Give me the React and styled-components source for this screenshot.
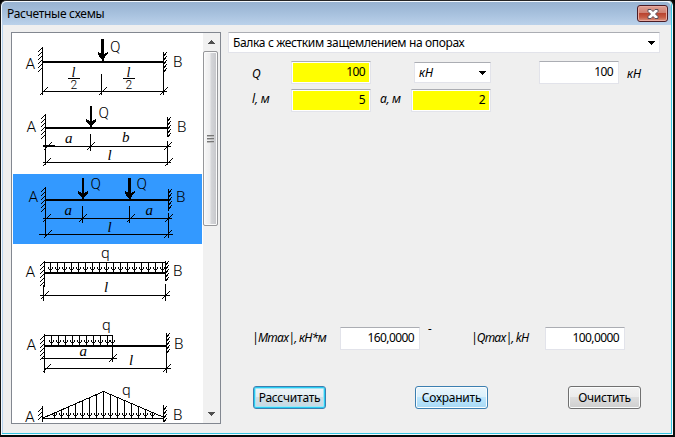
import React from 'react';
import styled, { createGlobalStyle, css } from 'styled-components';

const Global = createGlobalStyle`
  *{box-sizing:border-box}
  body{margin:0;background:#000;overflow:hidden;font:12px "Noto Sans","Open Sans",sans-serif;color:#000}
`;

const Window = styled.div`
  width:675px;height:437px;background:#efefef;overflow:hidden;
  border:solid;border-width:1px 2px 2px 1px;border-color:#252525 #101010 #050505 #151515;
  border-radius:6px 6px 0 0;
  box-shadow:inset 0 0 0 1px #f4f9fd,inset -1px -1px 0 1px #36c5e2,inset 1px 0 0 1px #b8d4ef;
`;
const TitleBar = styled.header`
  height:23px;margin:1px 2px 0 1px;padding:0 3px 0 5px;display:flex;justify-content:space-between;
  background:linear-gradient(#98b3d1,#a5bfdc 45%,#bad1ea);border-radius:5px 5px 0 0;
`;
const Title = styled.span`line-height:23px;font-size:12px;letter-spacing:-.28px;white-space:nowrap;`;
const Close = styled.button`
  width:31px;height:17px;margin-top:3px;padding:0;display:grid;place-items:center;
  border:1px solid #4a1c25;border-radius:3px;box-shadow:inset 0 0 0 1px #e9aaa0;
  background:linear-gradient(#dda094,#cf8071 45%,#b94430 50%,#c65c45 75%,#d99480);
`;
const Main = styled.main`display:flex;padding:7px 0 0 10px;gap:7px;`;
const ListBox = styled.aside`
  width:210px;height:392px;border:1px solid #828790;background:#fff;display:flex;overflow:hidden;
`;
const Schemes = styled.div`width:191px;padding:1px 1px 0;flex:none;overflow:hidden;`;
const Scheme = styled.div`
  height:70px;background:${p => p.$selected ? '#3399ff' : '#fff'};
  svg{display:block}
`;
const ScrollBar = styled.div`
  width:17px;display:flex;flex-direction:column;background:#f1f1f1;
`;
const ScrollButton = styled.div`height:18px;flex:none;display:grid;place-items:center;`;
const Thumb = styled.div`
  height:175px;width:15px;border:1px solid #96979a;border-radius:2px;
  background:linear-gradient(90deg,#f7f7f7,#ededee 45%,#d5d6d9 55%,#c5c6ca);
  box-shadow:inset 0 0 0 1px #fafafa;display:grid;place-items:center;
`;
const Space = styled.div`flex:1;`;
const Form = styled.section`width:432px;height:400px;display:flex;flex-direction:column;`;
const Row = styled.div`
  display:flex;height:${p => p.$h || 22}px;margin-top:${p => p.$top || 0}px;flex:none;
`;
const edge = css`border:1px solid #e2e3ea;border-top-color:#abadb3;background:#fff;`;
const Combo = styled.div`
  ${edge} width:${p => p.$w}px;height:21px;margin-left:${p => p.$left || 0}px;margin-top:${p => p.$top || 0}px;flex:none;
  padding:0 4px 0 4px;display:flex;align-items:center;justify-content:space-between;
  line-height:19px;font-size:12px;letter-spacing:${p => p.$spacing || 0}px;
  font-style:${p => p.$italic ? 'italic' : 'normal'};white-space:nowrap;
`;
const Field = styled.div`
  ${edge} width:80px;height:23px;margin-left:${p => p.$left || 0}px;flex:none;
  padding:0 5px 0 0;line-height:19px;text-align:right;font-size:12px;letter-spacing:-.6px;
  ${p => p.$yellow && css`background:#ff0;box-shadow:inset 0 0 0 1px #fff;`}
`;
const Label = styled.span`
  width:${p => p.$w}px;margin-left:${p => p.$left || 0}px;flex:none;white-space:nowrap;
  padding-top:${p => p.$drop || 0}px;line-height:${p => p.$line || 20}px;font-size:12px;font-style:italic;letter-spacing:${p => p.$spacing || 0}px;
`;
const Button = styled.button`
  width:73px;height:23px;margin-left:${p => p.$left || 0}px;padding:0;flex:none;
  font:12px/20px "Noto Sans","Open Sans",sans-serif;letter-spacing:-.25px;color:#000;white-space:nowrap;
  border:1px solid ${p => p.$kind === 'plain' ? '#707070' : '#3c7fb1'};border-radius:3px;
  background:${p => p.$kind === 'hot' ? 'linear-gradient(#eaf6fd,#d9f0fc 48%,#bee6fd 50%,#a7d9f5)'
    : p.$kind === 'focus' ? 'linear-gradient(#eef5f9,#e3edf2 48%,#cfdee6 50%,#c7d8e2)'
    : 'linear-gradient(#f2f2f2,#ebebeb 48%,#dddddd 50%,#cfcfcf)'};
  box-shadow:${p => p.$kind === 'focus' ? 'inset 0 0 0 1px #28cdf2, inset 0 0 0 2px #a1e5f6' : 'inset 0 0 0 1px #fafcfc'};
`;

const Triangle = ({ w = 7, h = 4, up, fill = '#000' }) => (
  <svg width={w} height={h} viewBox="0 0 7 4" preserveAspectRatio="none" shapeRendering="crispEdges">
    <path fill={fill} d={up ? 'M0 4L3.5 0L7 4z' : 'M0 0H7L3.5 4z'} />
  </svg>
);

const Line = ({ x1, y1, x2, y2, w = 1 }) => (
  <path d={`M${x1} ${y1}L${x2} ${y2}`} stroke="#000" strokeWidth={w} shapeRendering="crispEdges" />
);
const Force = ({ x, y, w = 3 }) => (
  <g shapeRendering="crispEdges">
    <path d={`M${x} ${y}v20`} stroke="#000" strokeWidth={w} />
    <path d={`M${x - 5} ${y + 13}l4 2h2l4 -2v2l-4 5v2h-2v-2l-4 -5z`} />
  </g>
);
const Wall = ({ x, y, h = 23, right }) => {
  const marks = [];
  for (let n = 0; n < h; n += 4) marks.push(`M${right ? x + 1 : x - 4} ${y + n + 4}l${right ? 3 : 4} -4`);
  return <path d={marks.join('')} fill="none" stroke="#000" strokeWidth="1" shapeRendering="crispEdges" />;
};
const Tick = ({ x, y }) => <Line x1={x - 3.5} y1={y + 4} x2={x + 4.5} y2={y - 4} />;
const Dimension = ({ from, to, y, points }) => (
  <g>
    <Line x1={from} y1={y} x2={to} y2={y} />
    {points.map(x => <Tick key={x} x={x} y={y} />)}
  </g>
);
const Letter = ({ x, y, children }) => (
  <text x={x} y={y} fontFamily="Roboto, Liberation Sans, sans-serif" fontWeight="300" fontSize="15.5">{children}</text>
);
const Symbol = ({ x, y, size = 15, children }) => (
  <text x={x} y={y} fontFamily="Liberation Serif, serif" fontStyle="italic" fontSize={size}>{children}</text>
);
const Loads = ({ xs, top, bottom }) => (
  <path
    d={xs.map(x => `M${x} ${top(x)}V${bottom}M${x - 2.5} ${bottom - 4.5}L${x} ${bottom - 1}L${x + 2.5} ${bottom - 4.5}`).join('')}
    fill="none" stroke="#000" shapeRendering="crispEdges"
  />
);
const Drawing = ({ top, children }) => (
  <svg width="189" height="70" viewBox={`13 ${top} 189 70`}>{children}</svg>
);
const series = (start, count) => Array.from({ length: count }, (_, i) => start + 7 * i);

const CentralForce = () => (
  <Drawing top={34}>
    <Line x1={42.5} y1={47} x2={42.5} y2={95} /><Line x1={163.5} y1={52} x2={163.5} y2={95} />
    <Wall x={42} y={48} h={23} /><Wall x={163} y={52} h={18} right />
    <Line x1={42} y1={62} x2={164} y2={62} w={2} /><Force x={102.5} y={39} />
    <Letter x={25.5} y={69}>A</Letter><Letter x={110} y={52}>Q</Letter><Letter x={173} y={67}>B</Letter>
    <Line x1={101.5} y1={74} x2={101.5} y2={95} />
    <Dimension from={42} to={167} y={91.5} points={[43, 102, 163]} />
    {[68, 123].map(x => (
      <g key={x}>
        <Symbol x={x + 3.5} y={76.5} size={14}>l</Symbol><Line x1={x} y1={78.5} x2={x + 12} y2={78.5} />
        <text x={x + 2.5} y={88.5} fontFamily="Roboto, sans-serif" fontWeight="300" fontSize="12">2</text>
      </g>
    ))}
  </Drawing>
);
const OffsetForce = () => (
  <Drawing top={104}>
    <Line x1={45.5} y1={114} x2={45.5} y2={165} /><Line x1={167.5} y1={117} x2={167.5} y2={137} />
    <Line x1={167.5} y1={141} x2={167.5} y2={165} />
    <Wall x={45} y={115} h={22} /><Wall x={167} y={117} h={18} right />
    <Line x1={45} y1={128} x2={168} y2={128} w={2} /><Force x={91} y={106} w={2} />
    <Letter x={26.5} y={131.5}>A</Letter><Letter x={98.5} y={118}>Q</Letter><Letter x={177} y={132}>B</Letter>
    <Line x1={90.5} y1={134} x2={90.5} y2={151} />
    <Dimension from={43} to={171} y={146.5} points={[47, 90, 167]} />
    <Line x1={43} y1={145.5} x2={55} y2={145.5} />
    <Symbol x={65} y={143}>a</Symbol><Symbol x={122} y={142}>b</Symbol>
    <Dimension from={43} to={171} y={162.5} points={[46, 168]} /><Symbol x={107.5} y={160}>l</Symbol>
  </Drawing>
);
const TwoForces = () => (
  <Drawing top={174}>
    <Line x1={45.5} y1={187} x2={45.5} y2={237} /><Line x1={168.5} y1={189} x2={168.5} y2={211} />
    <Line x1={168.5} y1={213} x2={168.5} y2={238} />
    <Wall x={45} y={188} h={22} /><Wall x={168} y={189} h={18} right />
    <Line x1={45} y1={200} x2={169} y2={200} w={2} /><Force x={83} y={178} w={2} /><Force x={129.5} y={178} />
    <Letter x={28.5} y={201.5}>A</Letter><Letter x={90.5} y={189}>Q</Letter><Letter x={136.5} y={189}>Q</Letter><Letter x={176} y={202}>B</Letter>
    <Line x1={82.5} y1={206} x2={82.5} y2={223} /><Line x1={129.5} y1={206} x2={129.5} y2={223} />
    <Dimension from={43} to={172} y={218.5} points={[46, 82, 130, 168]} />
    <Symbol x={64.5} y={215}>a</Symbol><Symbol x={145.5} y={215}>a</Symbol>
    <Dimension from={39} to={173} y={234.5} points={[47, 167]} /><Symbol x={107.5} y={232}>l</Symbol>
  </Drawing>
);
const UniformLoad = () => (
  <Drawing top={244}>
    <Line x1={44.5} y1={261} x2={44.5} y2={287} /><Line x1={43.5} y1={285} x2={43.5} y2={301} />
    <Line x1={165.5} y1={261} x2={165.5} y2={281} /><Line x1={165.5} y1={284} x2={165.5} y2={301} />
    <Wall x={44} y={262} h={23} /><Wall x={165} y={261} h={18} right />
    <Line x1={44} y1={262.5} x2={166} y2={262.5} /><Line x1={44} y1={273} x2={166} y2={273} w={2} />
    <Loads xs={series(50.5, 17)} top={() => 262} bottom={272} />
    <Letter x={25.5} y={276.5}>A</Letter><Letter x={101} y={257.5}>q</Letter><Letter x={173} y={276}>B</Letter>
    <Dimension from={40} to={170} y={295.5} points={[44, 165]} /><Symbol x={104} y={292}>l</Symbol>
  </Drawing>
);
const PartialLoad = () => (
  <Drawing top={314}>
    <Line x1={44.5} y1={334} x2={44.5} y2={373} /><Line x1={166.5} y1={333} x2={166.5} y2={373} />
    <Wall x={44} y={336} h={22} /><Wall x={166} y={333} h={18} right />
    <Line x1={44} y1={335.5} x2={113} y2={335.5} /><Line x1={44} y1={346} x2={167} y2={346} w={2} />
    <Loads xs={[...series(51.5, 9), 112.5]} top={() => 335} bottom={345} />
    <Letter x={26.5} y={349.5}>A</Letter><Letter x={102} y={329.5}>q</Letter><Letter x={174} y={349}>B</Letter>
    <Line x1={112.5} y1={345} x2={112.5} y2={362} />
    <Dimension from={42} to={117} y={358.5} points={[112]} /><Symbol x={79.5} y={356}>a</Symbol>
    <Dimension from={44} to={171} y={368.5} points={[46, 166]} /><Symbol x={129} y={365}>l</Symbol>
  </Drawing>
);
const TriangularLoad = () => (
  <Drawing top={384}>
    <Line x1={42.5} y1={406} x2={42.5} y2={422} /><Line x1={163.5} y1={405} x2={163.5} y2={422} />
    <Wall x={42} y={408} h={12} /><Wall x={163} y={406} h={15} right />
    <path d="M43 418L103.5 391.5L163 417" fill="none" stroke="#000" shapeRendering="crispEdges" />
    <Line x1={43} y1={418.5} x2={163} y2={418.5} />
    <Loads xs={series(54.5, 15)} top={x => x < 103 ? 418 - (x - 43) * .44 : 391.5 + (x - 103) * .43} bottom={418} />
    <Letter x={25} y={421.5}>A</Letter><Letter x={122} y={394.5}>q</Letter><Letter x={173} y={420}>B</Letter>
  </Drawing>
);
const schemes = [CentralForce, OffsetForce, TwoForces, UniformLoad, PartialLoad, TriangularLoad];

export default function App() {
  return (
    <>
      <Global />
      <Window>
        <TitleBar>
          <Title>Расчетные схемы</Title>
          <Close aria-label="Закрыть">
            <svg width="12" height="10" viewBox="0 0 12 10">
              <path d="M1 .5h3l2 2l2-2h3v2l-2.5 2.5L11 7.5v2H8l-2-2l-2 2H1v-2L3.5 5L1 2.5z" fill="#fff" stroke="#57505d" />
            </svg>
          </Close>
        </TitleBar>
        <Main>
          <ListBox>
            <Schemes>
              {schemes.map((Item, i) => <Scheme key={i} $selected={i === 2}><Item /></Scheme>)}
            </Schemes>
            <ScrollBar>
              <ScrollButton><Triangle up fill="#505050" /></ScrollButton>
              <Thumb>
                <svg width="7" height="8" shapeRendering="crispEdges">
                  <path d="M0 .5h7M0 3.5h7M0 6.5h7" stroke="#777" /><path d="M0 1.5h7M0 4.5h7M0 7.5h7" stroke="#bbb" />
                </svg>
              </Thumb>
              <Space />
              <ScrollButton><Triangle fill="#505050" /></ScrollButton>
            </ScrollBar>
          </ListBox>
          <Form>
            <Combo $w={432} $spacing={-.35}>Балка с жестким защемлением на опорах<Triangle /></Combo>
            <Row $top={8} $h={23}>
              <Label $left={24} $w={39} $drop={3}>Q</Label>
              <Field $yellow>100</Field>
              <Combo $left={43} $w={77} $top={1} $italic>кН<Triangle /></Combo>
              <Field $left={48}>100</Field>
              <Label $left={8} $w={30} $drop={3}>кН</Label>
            </Row>
            <Row $top={5} $h={23}>
              <Label $left={24} $w={39} $spacing={-.2}>l, м</Label>
              <Field $yellow>5</Field>
              <Label $left={9} $w={31} $spacing={-.3}>a, м</Label>
              <Field $yellow>2</Field>
            </Row>
            <Row $top={215} $h={23}>
              <Label $left={24} $w={88} $drop={1} $spacing={-.7}>|Mmax|, кН*м</Label>
              <Field>160,0000</Field>
              <Label $left={8} $w={43} $line={4}>-</Label>
              <Label $w={74} $drop={1} $spacing={-.8}>|Qmax|, kH</Label>
              <Field>100,0000</Field>
            </Row>
            <Row $top={36} $h={23}>
              <Button $kind="focus" $left={25}>Рассчитать</Button>
              <Button $kind="hot" $left={89}>Сохранить</Button>
              <Button $kind="plain" $left={80}>Очистить</Button>
            </Row>
          </Form>
        </Main>
      </Window>
    </>
  );
}
